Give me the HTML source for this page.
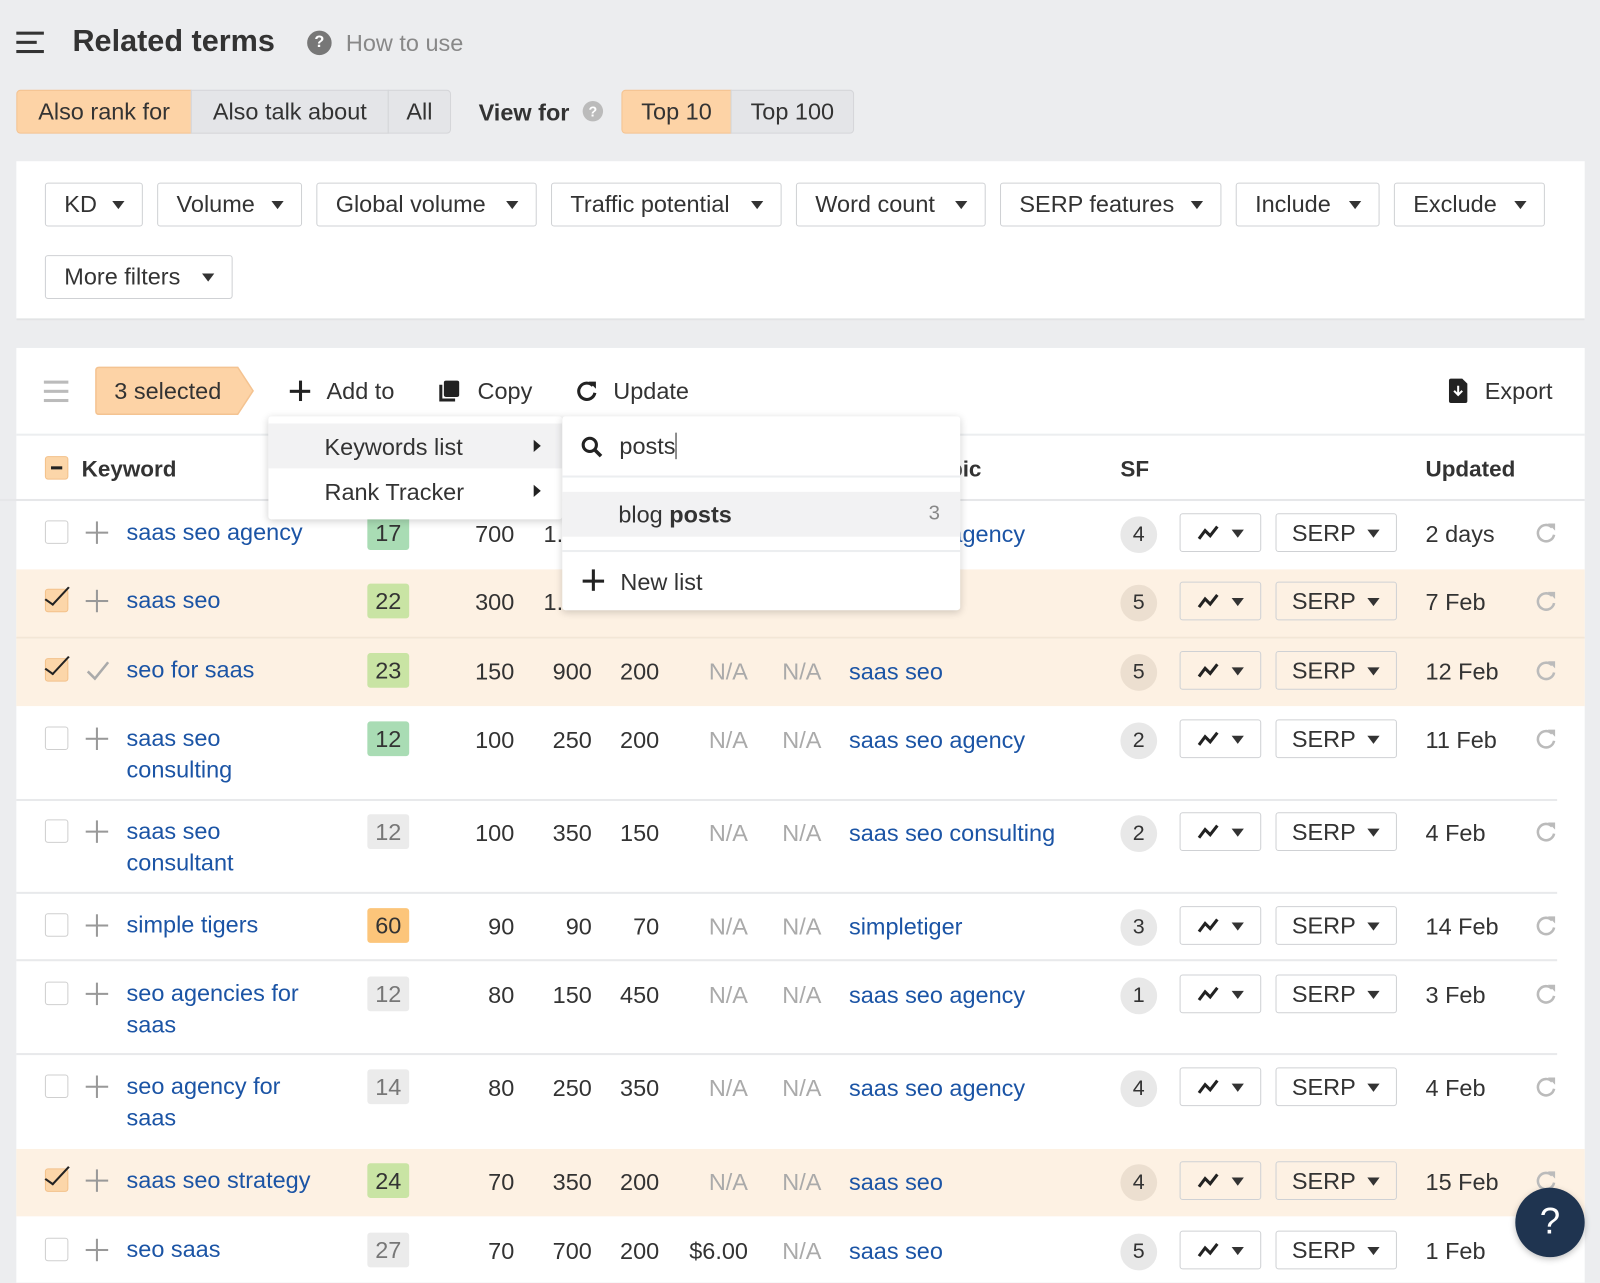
<!DOCTYPE html>
<html><head><meta charset="utf-8"><style>
*{box-sizing:border-box;margin:0;padding:0}
html,body{width:1600px;height:1283px;overflow:hidden;background:#ecedef}
body{font-family:"Liberation Sans",Arial,sans-serif;color:#333;font-size:23px}
#w{position:absolute;left:0;top:0;width:1568px;height:1257px;transform:scale(1.020408);transform-origin:0 0;background:#ecedef}
.a{position:absolute;white-space:nowrap}
.btn{position:absolute;height:43px;border:1px solid #cfd1d4;border-radius:3px;background:#fff;line-height:41px;padding-left:18px;font-size:23px}
.btn:after{content:"";position:absolute;right:17px;top:17px;border-left:6px solid transparent;border-right:6px solid transparent;border-top:8px solid #333}
.seg{position:absolute;top:88px;height:43px;line-height:41px;border:1px solid #d5d6d9;background:#e4e5e8;text-align:center}
.or{background:#fdd3a6;border-color:#f4c391}
.row{position:absolute;left:16px;width:1537px}
.row.sel{background:#fdf1e3}
.ln{position:absolute;left:16px;width:1510px;height:2px;background:#e8e9eb}
.cb{position:absolute;left:28px;width:23px;height:23px;border:1.5px solid #cfcfcf;border-radius:3px;background:#fff}
.cb.c{background:#fcd6a9;border-color:#f3c18a}
.cb.c:after{content:"";position:absolute;left:6px;top:-8px;width:8px;height:22px;border-right:2.5px solid #222;border-bottom:2.5px solid #222;transform:rotate(35deg) skewX(-8deg)}
.pl{position:absolute;left:68px;width:22px;height:22px}
.pl:before,.pl:after{content:"";position:absolute;background:#999}
.pl:before{left:10px;top:0;width:2px;height:22px}
.pl:after{left:0;top:10px;width:22px;height:2px}
.kw{position:absolute;left:108px;color:#1b54a5;line-height:31px;font-size:23px}
.kd{position:absolute;left:344px;width:41px;height:34px;border-radius:3px;text-align:center;line-height:34px}
.n{position:absolute;text-align:right;width:80px}
.na{color:#aaa}
.pt{position:absolute;left:816px;color:#1b54a5}
.sf{position:absolute;left:1082px;width:36px;height:36px;border-radius:50%;background:#e8e8e8;text-align:center;line-height:36px;font-size:21px}
.sel .sf{background:#ecdfd0}
.tb{position:absolute;left:1140px;width:80px;height:38px;border:1px solid #cfd1d4;border-radius:3px;background:#fff}
.sel .tb,.sel .sb{background:#fdf1e3}
.tb svg{position:absolute;left:16px;top:10px}
.tb:after,.sb:after{content:"";position:absolute;right:16px;top:15px;border-left:6px solid transparent;border-right:6px solid transparent;border-top:8px solid #333}
.sb{position:absolute;left:1234px;width:119px;height:38px;border:1px solid #cfd1d4;border-radius:3px;background:#fff;line-height:36px;padding-left:15px}
.up{position:absolute;left:1381px}
.rf{position:absolute;left:1488px}
</style></head><body><div id="w">

<div class="a" style="left:16px;top:31px;width:27px;height:3px;background:#333"></div>
<div class="a" style="left:16px;top:40px;width:20px;height:3px;background:#333"></div>
<div class="a" style="left:16px;top:49px;width:27px;height:3px;background:#333"></div>
<div class="a" style="left:71px;top:24px;font-size:30px;font-weight:bold;color:#333">Related terms</div>
<div class="a" style="left:301px;top:30px;width:24px;height:24px;border-radius:50%;background:#777;color:#fff;font-size:16px;font-weight:bold;text-align:center;line-height:24px">?</div>
<div class="a" style="left:339px;top:29px;color:#888;font-size:23px">How to use</div>

<div class="seg or" style="left:16px;width:172px;border-radius:4px 0 0 4px">Also rank for</div>
<div class="seg" style="left:187px;width:194px">Also talk about</div>
<div class="seg" style="left:380px;width:62px;border-radius:0 4px 4px 0">All</div>
<div class="a" style="left:469px;top:97px;font-weight:bold">View for</div>
<div class="a" style="left:571px;top:99px;width:20px;height:20px;border-radius:50%;background:#bbb;color:#fff;font-size:14px;font-weight:bold;text-align:center;line-height:20px">?</div>
<div class="seg or" style="left:609px;width:108px;border-radius:4px 0 0 4px">Top 10</div>
<div class="seg" style="left:716px;width:121px;border-radius:0 4px 4px 0">Top 100</div>

<div class="a" style="left:16px;top:158px;width:1537px;height:156px;background:#fff;border-bottom:2px solid #e2e3e5"></div>
<div class="btn" style="left:44px;top:179px;width:96px">KD</div>
<div class="btn" style="left:154px;top:179px;width:142px">Volume</div>
<div class="btn" style="left:310px;top:179px;width:216px">Global volume</div>
<div class="btn" style="left:540px;top:179px;width:226px">Traffic potential</div>
<div class="btn" style="left:780px;top:179px;width:186px">Word count</div>
<div class="btn" style="left:980px;top:179px;width:217px">SERP features</div>
<div class="btn" style="left:1211px;top:179px;width:141px">Include</div>
<div class="btn" style="left:1366px;top:179px;width:148px">Exclude</div>
<div class="btn" style="left:44px;top:250px;width:184px">More filters</div>

<div class="a" style="left:16px;top:341px;width:1537px;height:916px;background:#fff"></div>
<div class="a" style="left:43px;top:373px;width:24px;height:3px;background:#bbb"></div>
<div class="a" style="left:43px;top:382px;width:24px;height:3px;background:#bbb"></div>
<div class="a" style="left:43px;top:391px;width:24px;height:3px;background:#bbb"></div>
<svg class="a" style="left:93px;top:359px" width="158" height="48"><path d="M1 4 Q1 1 4 1 H140 L155 24 L140 47 H4 Q1 47 1 44 Z" fill="#fdd3a6" stroke="#f4c391" stroke-width="1.5"/></svg>
<div class="a" style="left:112px;top:370px">3 selected</div>
<div class="a" style="left:284px;top:382px;width:20px;height:2.5px;background:#222"></div>
<div class="a" style="left:293px;top:373px;width:2.5px;height:20px;background:#222"></div>
<div class="a" style="left:320px;top:370px">Add to</div>
<svg class="a" style="left:429px;top:372px" width="22" height="22"><rect x="6" y="1" width="15" height="16" rx="2" fill="#222"/><path d="M3 5 V20 H17" stroke="#222" stroke-width="3" fill="none"/></svg>
<div class="a" style="left:468px;top:370px">Copy</div>
<svg class="a" style="left:564px;top:372px" width="22" height="22"><path d="M17 6 A8 8 0 1 0 19 13" stroke="#222" stroke-width="3" fill="none"/><path d="M13 2 L20 2 L20 9 Z" fill="#222"/></svg>
<div class="a" style="left:601px;top:370px">Update</div>
<svg class="a" style="left:1418px;top:370px" width="22" height="26"><path d="M2 3 Q2 1 4 1 H15 L20 6 V23 Q20 25 18 25 H4 Q2 25 2 23 Z" fill="#222"/><path d="M11 8 V17 M7 13 L11 17 L15 13" stroke="#fff" stroke-width="2" fill="none"/></svg>
<div class="a" style="left:1455px;top:370px">Export</div>
<div class="a" style="left:16px;top:425px;width:1537px;height:2px;background:#eceef0"></div>

<div class="a" style="left:44px;top:447px;width:23px;height:23px;border-radius:3px;background:#fcd6a9;border:1.5px solid #f3c18a"></div>
<div class="a" style="left:50px;top:457px;width:11px;height:3px;background:#222"></div>
<div class="a" style="left:80px;top:447px;font-weight:bold;font-size:22px">Keyword</div>
<div class="a" style="left:930px;top:447px;font-weight:bold;font-size:22px">pic</div>
<div class="a" style="left:1098px;top:447px;font-weight:bold;font-size:22px">SF</div>
<div class="a" style="left:1397px;top:447px;font-weight:bold;font-size:22px">Updated</div>
<div class="a" style="left:0;top:489px;width:1553px;height:2px;background:#e6e7e9"></div>

<div class="row" style="top:491px;height:66px"><div class="cb" style="top:19px"></div><div class="pl" style="top:20px"></div><div class="kw" style="top:15px">saas seo agency</div><div class="kd" style="top:14px;background:#a9dcb4">17</div><div class="n" style="left:408px;top:19px">700</div><div class="n" style="left:484px;top:19px">1.2K</div><div class="pt" style="top:19px">saas seo agency</div><div class="sf" style="top:15px">4</div><div class="tb" style="top:12px"><svg width="22" height="16"><path d="M2 14 L8 6 L13 11 L20 2" stroke="#222" stroke-width="3" fill="none"/></svg></div><div class="sb" style="top:12px">SERP</div><div class="up" style="top:19px">2 days</div><svg class="rf" style="top:20px" width="22" height="22"><path d="M17 6 A8 8 0 1 0 19 13" stroke="#bbb" stroke-width="2.5" fill="none"/><path d="M13 2 L20 2 L20 9 Z" fill="#bbb"/></svg></div>

<div class="row sel" style="top:558px;height:67px"><div class="cb c" style="top:19px"></div><div class="pl" style="top:20px"></div><div class="kw" style="top:15px">saas seo</div><div class="kd" style="top:14px;background:#c9e4a4">22</div><div class="n" style="left:408px;top:19px">300</div><div class="n" style="left:484px;top:19px">1.1K</div><div class="sf" style="top:15px">5</div><div class="tb" style="top:12px"><svg width="22" height="16"><path d="M2 14 L8 6 L13 11 L20 2" stroke="#222" stroke-width="3" fill="none"/></svg></div><div class="sb" style="top:12px">SERP</div><div class="up" style="top:19px">7 Feb</div><svg class="rf" style="top:20px" width="22" height="22"><path d="M17 6 A8 8 0 1 0 19 13" stroke="#bbb" stroke-width="2.5" fill="none"/><path d="M13 2 L20 2 L20 9 Z" fill="#bbb"/></svg></div>
<div class="a" style="left:16px;top:624px;width:1537px;height:2px;background:#f3e6d6"></div>

<div class="row sel" style="top:626px;height:66px"><div class="cb c" style="top:19px"></div><svg class="a" style="left:68px;top:20px" width="24" height="22"><path d="M2 12 L9 19 L22 3" stroke="#aaa" stroke-width="2.5" fill="none"/></svg><div class="kw" style="top:15px">seo for saas</div><div class="kd" style="top:14px;background:#c9e4a4">23</div><div class="n" style="left:408px;top:19px">150</div><div class="n" style="left:484px;top:19px">900</div><div class="n" style="left:550px;top:19px">200</div><div class="n na" style="left:637px;top:19px">N/A</div><div class="n na" style="left:709px;top:19px">N/A</div><div class="pt" style="top:19px">saas seo</div><div class="sf" style="top:15px">5</div><div class="tb" style="top:12px"><svg width="22" height="16"><path d="M2 14 L8 6 L13 11 L20 2" stroke="#222" stroke-width="3" fill="none"/></svg></div><div class="sb" style="top:12px">SERP</div><div class="up" style="top:19px">12 Feb</div><svg class="rf" style="top:20px" width="22" height="22"><path d="M17 6 A8 8 0 1 0 19 13" stroke="#bbb" stroke-width="2.5" fill="none"/><path d="M13 2 L20 2 L20 9 Z" fill="#bbb"/></svg></div>

<div class="row" style="top:693px;height:90px"><div class="cb" style="top:19px"></div><div class="pl" style="top:20px"></div><div class="kw" style="top:15px">saas seo<br>consulting</div><div class="kd" style="top:14px;background:#a9dcb4">12</div><div class="n" style="left:408px;top:19px">100</div><div class="n" style="left:484px;top:19px">250</div><div class="n" style="left:550px;top:19px">200</div><div class="n na" style="left:637px;top:19px">N/A</div><div class="n na" style="left:709px;top:19px">N/A</div><div class="pt" style="top:19px">saas seo agency</div><div class="sf" style="top:15px">2</div><div class="tb" style="top:12px"><svg width="22" height="16"><path d="M2 14 L8 6 L13 11 L20 2" stroke="#222" stroke-width="3" fill="none"/></svg></div><div class="sb" style="top:12px">SERP</div><div class="up" style="top:19px">11 Feb</div><svg class="rf" style="top:20px" width="22" height="22"><path d="M17 6 A8 8 0 1 0 19 13" stroke="#bbb" stroke-width="2.5" fill="none"/><path d="M13 2 L20 2 L20 9 Z" fill="#bbb"/></svg></div>
<div class="ln" style="top:783px"></div>

<div class="row" style="top:784px;height:90px"><div class="cb" style="top:19px"></div><div class="pl" style="top:20px"></div><div class="kw" style="top:15px">saas seo<br>consultant</div><div class="kd" style="top:14px;background:#ebebeb;color:#777">12</div><div class="n" style="left:408px;top:19px">100</div><div class="n" style="left:484px;top:19px">350</div><div class="n" style="left:550px;top:19px">150</div><div class="n na" style="left:637px;top:19px">N/A</div><div class="n na" style="left:709px;top:19px">N/A</div><div class="pt" style="top:19px">saas seo consulting</div><div class="sf" style="top:15px">2</div><div class="tb" style="top:12px"><svg width="22" height="16"><path d="M2 14 L8 6 L13 11 L20 2" stroke="#222" stroke-width="3" fill="none"/></svg></div><div class="sb" style="top:12px">SERP</div><div class="up" style="top:19px">4 Feb</div><svg class="rf" style="top:20px" width="22" height="22"><path d="M17 6 A8 8 0 1 0 19 13" stroke="#bbb" stroke-width="2.5" fill="none"/><path d="M13 2 L20 2 L20 9 Z" fill="#bbb"/></svg></div>
<div class="ln" style="top:874px"></div>

<div class="row" style="top:876px;height:64px"><div class="cb" style="top:19px"></div><div class="pl" style="top:20px"></div><div class="kw" style="top:15px">simple tigers</div><div class="kd" style="top:14px;background:#fcc57a">60</div><div class="n" style="left:408px;top:19px">90</div><div class="n" style="left:484px;top:19px">90</div><div class="n" style="left:550px;top:19px">70</div><div class="n na" style="left:637px;top:19px">N/A</div><div class="n na" style="left:709px;top:19px">N/A</div><div class="pt" style="top:19px">simpletiger</div><div class="sf" style="top:15px">3</div><div class="tb" style="top:12px"><svg width="22" height="16"><path d="M2 14 L8 6 L13 11 L20 2" stroke="#222" stroke-width="3" fill="none"/></svg></div><div class="sb" style="top:12px">SERP</div><div class="up" style="top:19px">14 Feb</div><svg class="rf" style="top:20px" width="22" height="22"><path d="M17 6 A8 8 0 1 0 19 13" stroke="#bbb" stroke-width="2.5" fill="none"/><path d="M13 2 L20 2 L20 9 Z" fill="#bbb"/></svg></div>
<div class="ln" style="top:940px"></div>

<div class="row" style="top:943px;height:90px"><div class="cb" style="top:19px"></div><div class="pl" style="top:20px"></div><div class="kw" style="top:15px">seo agencies for<br>saas</div><div class="kd" style="top:14px;background:#ebebeb;color:#777">12</div><div class="n" style="left:408px;top:19px">80</div><div class="n" style="left:484px;top:19px">150</div><div class="n" style="left:550px;top:19px">450</div><div class="n na" style="left:637px;top:19px">N/A</div><div class="n na" style="left:709px;top:19px">N/A</div><div class="pt" style="top:19px">saas seo agency</div><div class="sf" style="top:15px">1</div><div class="tb" style="top:12px"><svg width="22" height="16"><path d="M2 14 L8 6 L13 11 L20 2" stroke="#222" stroke-width="3" fill="none"/></svg></div><div class="sb" style="top:12px">SERP</div><div class="up" style="top:19px">3 Feb</div><svg class="rf" style="top:20px" width="22" height="22"><path d="M17 6 A8 8 0 1 0 19 13" stroke="#bbb" stroke-width="2.5" fill="none"/><path d="M13 2 L20 2 L20 9 Z" fill="#bbb"/></svg></div>
<div class="ln" style="top:1032px"></div>

<div class="row" style="top:1034px;height:90px"><div class="cb" style="top:19px"></div><div class="pl" style="top:20px"></div><div class="kw" style="top:15px">seo agency for<br>saas</div><div class="kd" style="top:14px;background:#ebebeb;color:#777">14</div><div class="n" style="left:408px;top:19px">80</div><div class="n" style="left:484px;top:19px">250</div><div class="n" style="left:550px;top:19px">350</div><div class="n na" style="left:637px;top:19px">N/A</div><div class="n na" style="left:709px;top:19px">N/A</div><div class="pt" style="top:19px">saas seo agency</div><div class="sf" style="top:15px">4</div><div class="tb" style="top:12px"><svg width="22" height="16"><path d="M2 14 L8 6 L13 11 L20 2" stroke="#222" stroke-width="3" fill="none"/></svg></div><div class="sb" style="top:12px">SERP</div><div class="up" style="top:19px">4 Feb</div><svg class="rf" style="top:20px" width="22" height="22"><path d="M17 6 A8 8 0 1 0 19 13" stroke="#bbb" stroke-width="2.5" fill="none"/><path d="M13 2 L20 2 L20 9 Z" fill="#bbb"/></svg></div>

<div class="row sel" style="top:1126px;height:66px"><div class="cb c" style="top:19px"></div><div class="pl" style="top:20px"></div><div class="kw" style="top:15px">saas seo strategy</div><div class="kd" style="top:14px;background:#c9e4a4">24</div><div class="n" style="left:408px;top:19px">70</div><div class="n" style="left:484px;top:19px">350</div><div class="n" style="left:550px;top:19px">200</div><div class="n na" style="left:637px;top:19px">N/A</div><div class="n na" style="left:709px;top:19px">N/A</div><div class="pt" style="top:19px">saas seo</div><div class="sf" style="top:15px">4</div><div class="tb" style="top:12px"><svg width="22" height="16"><path d="M2 14 L8 6 L13 11 L20 2" stroke="#222" stroke-width="3" fill="none"/></svg></div><div class="sb" style="top:12px">SERP</div><div class="up" style="top:19px">15 Feb</div><svg class="rf" style="top:20px" width="22" height="22"><path d="M17 6 A8 8 0 1 0 19 13" stroke="#bbb" stroke-width="2.5" fill="none"/><path d="M13 2 L20 2 L20 9 Z" fill="#bbb"/></svg></div>

<div class="row" style="top:1194px;height:63px"><div class="cb" style="top:19px"></div><div class="pl" style="top:20px"></div><div class="kw" style="top:15px">seo saas</div><div class="kd" style="top:14px;background:#ebebeb;color:#777">27</div><div class="n" style="left:408px;top:19px">70</div><div class="n" style="left:484px;top:19px">700</div><div class="n" style="left:550px;top:19px">200</div><div class="n" style="left:637px;top:19px">$6.00</div><div class="n na" style="left:709px;top:19px">N/A</div><div class="pt" style="top:19px">saas seo</div><div class="sf" style="top:15px">5</div><div class="tb" style="top:12px"><svg width="22" height="16"><path d="M2 14 L8 6 L13 11 L20 2" stroke="#222" stroke-width="3" fill="none"/></svg></div><div class="sb" style="top:12px">SERP</div><div class="up" style="top:19px">1 Feb</div></div>

<div class="a" style="left:263px;top:408px;width:288px;height:101px;background:#fff;box-shadow:0 2px 8px rgba(0,0,0,.18);border-radius:3px"></div>
<div class="a" style="left:263px;top:415px;width:288px;height:44px;background:#f2f2f3"></div>
<div class="a" style="left:318px;top:425px">Keywords list</div>
<div class="a" style="left:318px;top:469px">Rank Tracker</div>
<div class="a" style="left:523px;top:431px;border-top:6px solid transparent;border-bottom:6px solid transparent;border-left:7px solid #222"></div>
<div class="a" style="left:523px;top:475px;border-top:6px solid transparent;border-bottom:6px solid transparent;border-left:7px solid #222"></div>

<div class="a" style="left:551px;top:408px;width:390px;height:190px;background:#fff;box-shadow:0 2px 8px rgba(0,0,0,.18);border-radius:3px"></div>
<svg class="a" style="left:569px;top:427px" width="22" height="22"><circle cx="9" cy="9" r="6.5" stroke="#222" stroke-width="3" fill="none"/><path d="M14 14 L20 20" stroke="#222" stroke-width="3.5"/></svg>
<div class="a" style="left:607px;top:424px">posts<span style="display:inline-block;width:1.5px;height:26px;background:#222;vertical-align:-5px"></span></div>
<div class="a" style="left:551px;top:466px;width:390px;height:2px;background:#eceef0"></div>
<div class="a" style="left:551px;top:482px;width:390px;height:44px;background:#f2f2f3"></div>
<div class="a" style="left:606px;top:491px">blog <b>posts</b></div>
<div class="a" style="left:910px;top:492px;color:#888;font-size:20px">3</div>
<div class="a" style="left:551px;top:539px;width:390px;height:2px;background:#eceef0"></div>
<div class="a" style="left:571px;top:568px;width:21px;height:2.5px;background:#222"></div>
<div class="a" style="left:580px;top:558px;width:2.5px;height:21px;background:#222"></div>
<div class="a" style="left:608px;top:557px">New list</div>

<div class="a" style="left:1485px;top:1164px;width:68px;height:68px;border-radius:50%;background:#1f3450;color:#fff;text-align:center;line-height:66px;font-size:36px;box-shadow:0 2px 6px rgba(0,0,0,.25)">?</div>
</div></body></html>
